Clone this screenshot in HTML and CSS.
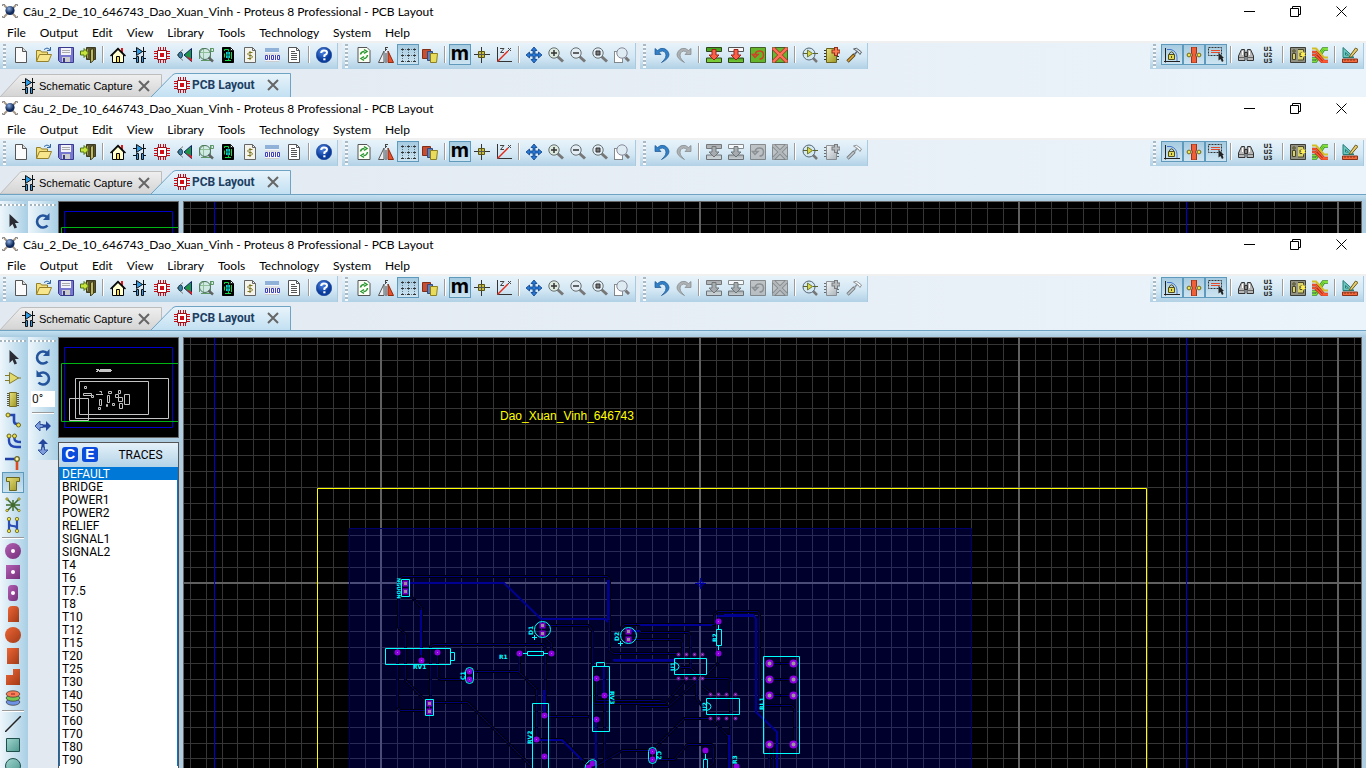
FILE: index.html
```html
<!DOCTYPE html>
<html lang="en">
<head>
<meta charset="utf-8">
<title>Proteus 8 Professional - PCB Layout</title>
<link rel="stylesheet" href="styles.css">
</head>
<body>
<svg class="sprite" width="0" height="0" aria-hidden="true">
  <defs>
    <linearGradient id="gGreen" x2="0" y2="1"><stop offset="0" stop-color="#3fa01c"/><stop offset="1" stop-color="#7fd03a"/></linearGradient>
    <linearGradient id="gGold" x2="1" y2="1"><stop offset="0" stop-color="#e8e27c"/><stop offset="1" stop-color="#9c9423"/></linearGradient>
    <linearGradient id="gPurple" x2="1" y2="1"><stop offset="0" stop-color="#b45fb4"/><stop offset="1" stop-color="#74307a"/></linearGradient>
    <linearGradient id="gOrange" x2="1" y2="1"><stop offset="0" stop-color="#ee6636"/><stop offset="1" stop-color="#a13a17"/></linearGradient>
    <linearGradient id="gTeal" x2="1" y2="1"><stop offset="0" stop-color="#9fd6cf"/><stop offset="1" stop-color="#4f9890"/></linearGradient>
    <linearGradient id="gTab" x2="0" y2="1"><stop offset="0" stop-color="#e9f4fb"/><stop offset="1" stop-color="#c2e0f2"/></linearGradient>
    <linearGradient id="gTabOff" x2="0" y2="1"><stop offset="0" stop-color="#efefef"/><stop offset="1" stop-color="#d4d4d4"/></linearGradient>
    <radialGradient id="gBall" cx=".4" cy=".3"><stop offset="0" stop-color="#8fb0de"/><stop offset="1" stop-color="#102a5c"/></radialGradient>
    <radialGradient id="gHelp" cx=".4" cy=".3"><stop offset="0" stop-color="#4f86e6"/><stop offset="1" stop-color="#0c3d9c"/></radialGradient>
  </defs>

  <symbol id="logo" viewBox="0 0 16 16"><path d="M2 2l4 4M14 2l-4 4M2 14l4-4M14 14l-4-4" stroke="#a89a88" stroke-width="2"/><path d="M.5 3V1.500H3M15.500 3V1.500H13M.5 13v1.500H3M15.500 13v1.500H13" fill="none" stroke="#888"/><circle cx="8" cy="7.500" r="4.600" fill="url(#gBall)"/></symbol>
  <symbol id="new" viewBox="0 0 16 16"><path d="M1.500.5h7l4 4v11h-11z" fill="#fbfbfb" stroke="#555"/><path d="M8.500.5v4h4" fill="#ddd" stroke="#555"/></symbol>
  <symbol id="open" viewBox="0 0 16 16"><path d="M.5 14V3.500h4l1 1.500h6v2" fill="#f3df7c" stroke="#94802a"/><path d="M.5 14.500l3-7h12l-3 7z" fill="#f7e68b" stroke="#94802a"/><path d="M8 2.500q3-3 6 0M14.500 0v3.500h-3.500" fill="none" stroke="#2f66a6"/></symbol>
  <symbol id="save" viewBox="0 0 16 16"><path d="M.5.5h15v15h-13l-2-2z" fill="#7878cf" stroke="#38388c"/><path d="M3 1h10v7H3z" fill="#f3f3fb"/><path d="M4 3.500h8M4 5.500h8" stroke="#aaa"/><path d="M4 10h8v5H4z" fill="#ccc"/><path d="M5 11h2v4H5z" fill="#38388c"/></symbol>
  <symbol id="exit" viewBox="0 0 16 16"><path d="M6.500.5h9v12h-9z" fill="#5a5630" stroke="#3c3c22"/><path d="M10.500 2.500l3-1v12l-3 2.500z" fill="#c2ba58" stroke="#3c3c22"/><path d="M7.500 2v9" stroke="#a39b4c"/><path d="M.5 4H4V1.500L8.500 6 4 10.500V8H.5z" fill="#c7e43c" stroke="#4e7516"/></symbol>
  <symbol id="home" viewBox="0 0 16 16"><path d="M11 1h2v5h-2z" fill="#e21818"/><path d="M2.500 8v7.500h11V8L8 2.500z" fill="#ffffd0" stroke="#000"/><path d="M.5 9L8 1.500 15.500 9" fill="none" stroke="#000" stroke-width="1.500"/><path d="M6.500 9.500h3v6h-3z" fill="#ffdf2a" stroke="#000"/></symbol>
  <symbol id="schem" viewBox="0 0 16 16"><path d="M1 4.500h13M9 11.500h5M1 11.500h3" stroke="#111"/><path d="M4.500.5v8l6-4z" fill="#2c9be8" stroke="#111"/><path d="M11.500 0v9" stroke="#111"/><path d="M4.500 9.500h2v6h-2zM9.500 9.500h2v6h-2z" fill="#2c9be8" stroke="#111"/></symbol>
  <symbol id="pcb" viewBox="0 0 16 16"><path d="M4.500 0v16M6.500 0v16M9.500 0v16M11.500 0v16M0 4.500h16M0 6.500h16M0 9.500h16M0 11.500h16" stroke="#c40f18"/><path d="M3.500 3.500h9v9h-9z" fill="#fff" stroke="#a30b14"/><path d="M6 6h4v4H6z" fill="#d40e18"/></symbol>
  <symbol id="view3d" viewBox="0 0 16 16"><path d="M7 2.500L1 8l6 5.500" fill="none" stroke="#777"/><ellipse cx="4.500" cy="8" rx="2" ry="3" fill="#3d83a8" stroke="#245"/><path d="M15.500 1.500v13L8 8z" fill="#1d9446" stroke="#126"/><path d="M10 9l6 3v3z" fill="#d91f1f"/></symbol>
  <symbol id="gerber" viewBox="0 0 16 16"><path d="M1.500 12V3.500L4 1.500h4M12.500 1v13M3 13.500h9M2 5.500h10M5.500 1v12M13 1.500h2.500v3H13z" fill="none" stroke="#5c9662"/><circle cx="7" cy="7" r="5.500" fill="#c7ead2" fill-opacity=".5" stroke="#4f7560"/><path d="M10.500 10.500l4.500 4" stroke="#5f6262" stroke-width="2.500"/></symbol>
  <symbol id="design" viewBox="0 0 16 16"><path d="M2.500.5h8l3 3v12h-11z" fill="#000" stroke="#000"/><path d="M4.500 4v-1.500h4v2M4.500 6.500v4M5 13.500h6M8.500 11v2M11.500 5v7" fill="none" stroke="#15d845"/><path d="M6 5h4v6H6z" fill="#00d9dd"/><path d="M8 4v8M5 8h6" stroke="#08483f"/><path d="M10.500.5v3h3z" fill="#fff" stroke="#222"/></symbol>
  <symbol id="bom" viewBox="0 0 16 16"><path d="M2.500.5h8l3 3v12h-11z" fill="#f4f4ec" stroke="#666"/><path d="M10.500.5v3h3" fill="none" stroke="#666"/><path d="M10.500 5.500H7L5.500 7 7 8.500h2.500L10.500 10 9 11.500H5.500M8 4v9" fill="none" stroke="#7d741f"/></symbol>
  <symbol id="source" viewBox="0 0 16 16"><path d="M1 1h14v4H1z" fill="#90b1d8"/><path d="M1 5h14v10H1z" fill="#f3f5f8"/><path d="M1 7h14M1 14.500h14" stroke="#ccc"/><path d="M1.500 8.500h2v4h-2zM5.500 8v5M7.500 8.500h2v4h-2zM11.500 8v5M13.500 8.500h2v4h-2z" fill="none" stroke="#3e3ebc"/></symbol>
  <symbol id="notes" viewBox="0 0 16 16"><path d="M2.500.5h8l3 3v12h-11z" fill="#fff" stroke="#555"/><path d="M10.500.5v3h3M5 4.500h4M5 6.500h6M5 8.500h6M5 10.500h6M5 12.500h6" fill="none" stroke="#555"/></symbol>
  <symbol id="help" viewBox="0 0 16 16"><circle cx="8" cy="8" r="7.700" fill="url(#gHelp)" stroke="#123c8e" stroke-width=".6"/><path d="M5.200 6Q5.200 3.500 8 3.500q3 0 3 2.200Q11 7.200 8.400 8.300V10" fill="none" stroke="#fff" stroke-width="2"/><path d="M7.300 11.300h2.200v2H7.300z" fill="#fff"/></symbol>
  <symbol id="refresh" viewBox="0 0 16 16"><path d="M2 .5h9l3 3v12H2z" fill="#fcfff4" stroke="#555"/><path d="M4.500 7.500q.5-3 4-3M8 2.500l3 2-3 2M11.500 8q-.5 3.500-4 3.500M8 9.500l-3 2 3 2" fill="none" stroke="#2b9733" stroke-width="1.500"/></symbol>
  <symbol id="mirror" viewBox="0 0 16 16"><path d="M.5 15.500H6V4z" fill="#eceff2" stroke="#555"/><path d="M10 4v11.500h5.500z" fill="#e84f2d" stroke="#8c2c12"/><path d="M8 6v10M7 .5h3M7.500 0v4M7 2.500h2" stroke="#444" fill="none"/></symbol>
  <symbol id="grid" viewBox="0 0 16 16"><path d="M2.500 1v14M8.500 1v14M14.500 1v14M1 2.500h15M1 8.500h15M1 14.500h15" stroke="#5c7382" stroke-dasharray="1 1"/><path d="M1 2.500h3M7 2.500h3M13 2.500h3M1 8.500h3M7 8.500h3M13 8.500h3M1 14.500h3M7 14.500h3M13 14.500h3" stroke="#333"/></symbol>
  <symbol id="layers" viewBox="0 0 16 16"><path d="M.5 2.500h8v9h-8z" fill="#c84e32" stroke="#803018"/><path d="M5.500 4.500h5v9h-5z" fill="#6080bc" stroke="#34497c"/><path d="M8.500 6.500h7l-1 9h-6z" fill="#e9dc5c" stroke="#8b7f22"/></symbol>
  <symbol id="origin" viewBox="0 0 16 16"><path d="M7.500 0v16M0 7.500h16" stroke="#333"/><path d="M4.500 4.500h6v6h-6z" fill="#c9bd3c" stroke="#5a5516"/><path d="M7.500 5v5M5 7.500h5" stroke="#555"/></symbol>
  <symbol id="polar" viewBox="0 0 16 16"><path d="M1.500 0v14.500H16" fill="none" stroke="#333"/><path d="M1.500 14.500L12 4" stroke="#e12b1a" stroke-width="1.400"/><path d="M4 1.500h4L4.500 5.500H8M12 1l3 3M15 1l-3 3" fill="none" stroke="#444"/></symbol>
  <symbol id="pan" viewBox="0 0 16 16"><path d="M8 0l3 3.500H9V7h3.500V5L16 8l-3.500 3V9H9v3.500h2L8 16l-3-3.500h2V9H3.500v2L0 8l3.500-3v2H7V3.500H5z" fill="#2679d6" stroke="#0e3f87" stroke-width=".8"/></symbol>
  <symbol id="zin" viewBox="0 0 16 16"><path d="M9.500 9.500l5.500 5" stroke="#777" stroke-width="3"/><circle cx="6" cy="6" r="5.200" fill="#ddeadf" stroke="#667070"/><path d="M3 6h6M6 3v6" stroke="#333" stroke-width="1.500"/></symbol>
  <symbol id="zout" viewBox="0 0 16 16"><path d="M9.500 9.500l5.500 5" stroke="#777" stroke-width="3"/><circle cx="6" cy="6" r="5.200" fill="#e3edf6" stroke="#667070"/><path d="M3 6h6" stroke="#333" stroke-width="1.500"/></symbol>
  <symbol id="zall" viewBox="0 0 16 16"><path d="M9.500 9.500l5.500 5" stroke="#777" stroke-width="3"/><circle cx="6" cy="6" r="5.200" fill="#e3edf6" stroke="#667070"/><path d="M4 4h4v4H4z" fill="#777" stroke="#333"/></symbol>
  <symbol id="zarea" viewBox="0 0 16 16"><path d="M.5 4.500h8v11h-8z" fill="#fff" stroke="#222" stroke-dasharray="1 1"/><path d="M11.500 10.500l3.500 3.500" stroke="#777" stroke-width="3"/><circle cx="8" cy="6" r="5.200" fill="#dfebf3" stroke="#889"/></symbol>
  <symbol id="undo" viewBox="0 0 16 16"><path d="M1 1.500v6h6L5 5.500q4-3 6.500.5 2 4.500-4 9.500 8-4 7.500-8.500Q13 .5 6.500 1.500L3.500 3.500z" fill="#3280c8" stroke="#1a5591" stroke-width=".7"/></symbol>
  <symbol id="redo" viewBox="0 0 16 16"><path d="M15 1.500v6H9l2-2q-4-3-6.500.5-2 4.500 4 9.500-8-4-7.500-8.500Q3 .5 9.500 1.500l3 2z" fill="#aeb2b5" stroke="#808588" stroke-width=".7"/></symbol>
  <symbol id="push" viewBox="0 0 16 16"><path d="M.5.5h15v4H.5zM.5 11h15v4.500H.5z" fill="url(#gGreen)" stroke="#31451c"/><path d="M6 2.500h4V8h3l-5 5-5-5h3z" fill="#fa6049" stroke="#9b2418"/></symbol>
  <symbol id="pull" viewBox="0 0 16 16"><path d="M.5.5h15v4H.5z" fill="#f6f6f6" stroke="#555"/><path d="M.5 11h15v4.500H.5z" fill="url(#gGreen)" stroke="#31451c"/><path d="M6 2.500h4V8h3l-5 5-5-5h3z" fill="#fa6049" stroke="#9b2418"/></symbol>
  <symbol id="reload" viewBox="0 0 16 16"><path d="M.5.5h15v15H.5z" fill="#65b52b" stroke="#436028"/><path d="M5 8q.5-4 4.500-4t4 4q0 4-4 4M2.500 7.500L5 10.500l3-3z" fill="none" stroke="#ce4226" stroke-width="1.500"/></symbol>
  <symbol id="clear" viewBox="0 0 16 16"><path d="M.5.500h15v15H.5z" fill="#68b52e" stroke="#436028"/><path d="M1 1l14 14M15 1L1 15" stroke="#9c3020" stroke-width="4"/><path d="M1 1l14 14M15 1L1 15" stroke="#fa7058" stroke-width="2.500"/></symbol>
  <symbol id="pick" viewBox="0 0 16 16"><path d="M10 10l5 5" stroke="#777" stroke-width="2.500"/><circle cx="7" cy="7" r="6" fill="#d4e8f2" stroke="#567"/><path d="M1 6.500h4M11 6.500h5" stroke="#596332"/><path d="M5.500 3v7l5-3.500z" fill="#d6d84c" stroke="#767926"/></symbol>
  <symbol id="addpart" viewBox="0 0 16 16"><path d="M2.500 1.500h10v14h-10z" fill="url(#gGold)" stroke="#69621d"/><path d="M0 3.500h2M0 6.500h2M0 9.500h2M0 12.500h2M13 9.500h2M13 12.500h2" stroke="#333"/><path d="M12 0v9M7.500 4.500h8.500" stroke="#91301c" stroke-width="4"/><path d="M12 1v7M8.500 4.500h7" stroke="#fa7a51" stroke-width="2"/></symbol>
  <symbol id="hammer" viewBox="0 0 16 16"><path d="M1.500 14.500l7-7" stroke="#5b4215" stroke-width="3.200"/><path d="M1.800 14.200l6-6" stroke="#dda236" stroke-width="1.600"/><path d="M8.500 7.500L11 4.500" stroke="#59616a" stroke-width="1.600"/><path d="M7.500 2q3-2 5.500 1l2.500 2-1.500 2.500-2-2.500-2-1.500z" fill="#dce0e4" stroke="#59616a"/></symbol>
  <symbol id="trim" viewBox="0 0 16 16"><path d="M1.500 1v14.500M0 14.500h16" stroke="#222"/><path d="M3 2.500h4q6 2 6 8V14" fill="none" stroke="#4675c8"/><path d="M4.500 7.500h6v5h-6z" fill="#e2da52" stroke="#504c1c"/><path d="M5.500 7.500V6q2-2.500 4 0v1.500M7.500 9v2" fill="none" stroke="#504c1c"/></symbol>
  <symbol id="via" viewBox="0 0 16 16"><path d="M5.500 0h5v6l-1 2 1 2v6h-5v-6l1-2-1-2z" fill="#ef6039" stroke="#9c3117"/><circle cx="3" cy="8" r="1.900" fill="#f0e44f" stroke="#6e681e"/><circle cx="13" cy="8" r="1.900" fill="#f0e44f" stroke="#6e681e"/></symbol>
  <symbol id="select" viewBox="0 0 16 16"><path d="M.5.5h13v8H.5z" fill="none" stroke="#333" stroke-dasharray="2 1"/><path d="M3 3.500h9M3 5.500h9" stroke="#e34a2b"/><path d="M10.500 5.500v8l2-1.500 1.500 3 1.500-1-1-3h1.500z" fill="#222"/></symbol>
  <symbol id="find" viewBox="0 0 16 16"><path d="M.5 13.500V9l3-6.500h3l.5 3v8zM15.500 13.500V9l-3-6.500h-3l-.5 3v8z" fill="#b9b9b9" stroke="#333"/><path d="M6.500 5.500h3v4h-3z" fill="#888" stroke="#333"/><path d="M1 10.500h5.500M9.500 10.500H15" stroke="#666"/><path d="M4.500 4v4M11.500 4v4" stroke="#fff"/></symbol>
  <symbol id="place" viewBox="0 0 16 16"><path d="M.5.5h15v15H.5z" fill="#929282" stroke="#3d3d37"/><path d="M3 3h2v2H3zM2.500 6.500h3v6h-3zM8 2.500h5.500v3.500H10v3.500h3.500v3.500H8" fill="#d9d26a" stroke="#48462a"/><path d="M13 4l1 2 2-.5-1.500 2L16 9h-2l-1 2-1-2h-2l1.500-1.500L10 5.500l2 .5z" fill="#ffef4f"/></symbol>
  <symbol id="route" viewBox="0 0 16 16"><path d="M0 14.500h4l8-12h4M0 11.500h4l7-10h5" fill="none" stroke="#3c8a1f" stroke-width="2.600"/><path d="M0 14.500h4l8-12h4M0 11.500h4l7-10h5" fill="none" stroke="#7fe03c" stroke-width="1.200"/><path d="M0 1.500h4l8 9h4" fill="none" stroke="#d2bd25" stroke-width="2"/><path d="M0 5h4l8 9h4M0 8h3l7 7h6" fill="none" stroke="#a32c14" stroke-width="2.600"/><path d="M0 5h4l8 9h4M0 8h3l7 7h6" fill="none" stroke="#ff5a36" stroke-width="1.400"/></symbol>
  <symbol id="measure" viewBox="0 0 16 16"><path d="M1 .5v10h11z" fill="#6bc7c0" stroke="#247d77"/><path d="M3.500 5.500V8h3z" fill="#dceff4" stroke="#247d77"/><path d="M7 10l6.500-9 2.500 1.500L9.500 10z" fill="#e9cd6c" stroke="#6c5b22"/><path d="M.5 12h15v3.500H.5z" fill="#f36a3d" stroke="#8a3219"/><path d="M3 12v2M6 12v2M9 12v2M12 12v2" stroke="#8a3219"/></symbol>

  <symbol id="arrow" viewBox="0 0 16 16"><path d="M4.500 1v13l3-3 2 4.500 2.500-1-2-4.500H14z" fill="#2b2b33"/></symbol>
  <symbol id="comp" viewBox="0 0 16 16"><path d="M0 5.500h4M0 10.500h4M13 8h3" stroke="#857b2c"/><path d="M4.500 2.500v11l9-5.500z" fill="#e2da6a" stroke="#857b2c"/></symbol>
  <symbol id="pack" viewBox="0 0 16 16"><path d="M2 2.500h12M2 4.500h12M2 6.500h12M2 8.500h12M2 10.500h12M2 12.500h12M2 14.500h12" stroke="#555"/><path d="M4.500 1.500h7v14h-7z" fill="url(#gGold)" stroke="#746d22"/></symbol>
  <symbol id="track" viewBox="0 0 16 16"><path d="M3 3h6v6q0 3 3 3h2" fill="none" stroke="#2547b3" stroke-width="2.600"/><circle cx="3" cy="3" r="2" fill="#e9df47" stroke="#6c6520"/><circle cx="13.500" cy="13" r="2" fill="#e9df47" stroke="#6c6520"/></symbol>
  <symbol id="match" viewBox="0 0 16 16"><path d="M4 3v5q0 6 8 6h4M9.500 3v3q0 3 6.500 3" fill="none" stroke="#2547b3" stroke-width="2.400"/><circle cx="4" cy="3" r="2" fill="#e9df47" stroke="#6c6520"/><circle cx="9.500" cy="3" r="2" fill="#e9df47" stroke="#6c6520"/></symbol>
  <symbol id="viat" viewBox="0 0 16 16"><path d="M0 5h12" stroke="#1f3fa6" stroke-width="2.500"/><path d="M12 6v10" stroke="#dd4a20" stroke-width="2.600"/><circle cx="12" cy="5" r="2.300" fill="#f8f3ac" stroke="#6c6520" stroke-width="1.300"/></symbol>
  <symbol id="zone" viewBox="0 0 16 16"><path d="M1.500 2.500h13v4h-3v9h-7v-9h-3z" fill="url(#gGold)" stroke="#6c6520"/></symbol>
  <symbol id="rats" viewBox="0 0 16 16"><path d="M2 3l12 12M14 3L2 15M8 4v11M1 9h14" stroke="#3f6b2c" stroke-width="1.500"/><g fill="#e9df47" stroke="#6c6520" stroke-width=".7"><circle cx="2" cy="3" r="1.200"/><circle cx="14" cy="3" r="1.200"/><circle cx="2" cy="14.500" r="1.200"/><circle cx="14" cy="14.500" r="1.200"/></g></symbol>
  <symbol id="conn" viewBox="0 0 16 16"><path d="M4 3v11M12 3v11M4 6q0 3 4 3t4 3" fill="none" stroke="#2b4db3" stroke-width="2.200"/><g fill="#e9df47" stroke="#6c6520" stroke-width=".8"><circle cx="4" cy="2" r="1.700"/><circle cx="12" cy="2" r="1.700"/><circle cx="4" cy="14" r="1.700"/><circle cx="12" cy="14" r="1.700"/></g></symbol>
  <symbol id="padround" viewBox="0 0 16 16"><circle cx="8" cy="8" r="8" fill="url(#gPurple)"/><circle cx="8" cy="8" r="2" fill="#fff"/></symbol>
  <symbol id="padsq" viewBox="0 0 16 16"><path d="M1 1h14v14H1z" fill="url(#gPurple)"/><circle cx="8" cy="8" r="2" fill="#fff"/></symbol>
  <symbol id="paddil" viewBox="0 0 16 16"><rect x="3" width="10" height="16" rx="3.500" fill="url(#gPurple)"/><circle cx="8" cy="8" r="2" fill="#fff"/></symbol>
  <symbol id="edge" viewBox="0 0 16 16"><path d="M3 16V4q0-4 4-4h3q4 0 4 4v12z" fill="url(#gOrange)"/></symbol>
  <symbol id="smtc" viewBox="0 0 16 16"><circle cx="8" cy="8" r="8" fill="url(#gOrange)"/></symbol>
  <symbol id="smtr" viewBox="0 0 16 16"><path d="M2 0h12v16H2z" fill="url(#gOrange)"/></symbol>
  <symbol id="smtp" viewBox="0 0 16 16"><path d="M1 16V6h7V0h7v16z" fill="url(#gOrange)"/></symbol>
  <symbol id="stack" viewBox="0 0 16 16"><g stroke="#333" stroke-width=".7"><ellipse cx="8" cy="12" rx="6.800" ry="3.300" fill="#6d92e6"/><ellipse cx="8" cy="8" rx="6.800" ry="3.200" fill="#78c652"/><ellipse cx="8" cy="4" rx="6.800" ry="3.200" fill="#fa7d55"/></g><path d="M6 4h4" stroke="#822"/></symbol>
  <symbol id="line" viewBox="0 0 16 16"><path d="M0 16L16 0" stroke="#222" stroke-width="1.500"/></symbol>
  <symbol id="box" viewBox="0 0 16 16"><path d="M1.500 1.500h13v13h-13z" fill="url(#gTeal)" stroke="#1f4f4a"/></symbol>
  <symbol id="circ" viewBox="0 0 16 16"><circle cx="8" cy="8" r="7.500" fill="url(#gTeal)" stroke="#1f4f4a"/></symbol>
  <symbol id="cw" viewBox="0 0 16 16"><path d="M12.500 12.500A6 6 0 1 1 12 4" fill="none" stroke="#24549c" stroke-width="2.600"/><path d="M14.500 0v7H8z" fill="#24549c"/></symbol>
  <symbol id="ccw" viewBox="0 0 16 16"><path d="M3.500 12.500A6 6 0 1 0 4 4" fill="none" stroke="#24549c" stroke-width="2.600"/><path d="M1.500 0v7H8z" fill="#24549c"/></symbol>
  <symbol id="fliph" viewBox="0 0 16 16"><path d="M0 8l5-5v3.500h3v3H5V13z" fill="#7d9ddd" stroke="#34529b"/><path d="M16 8l-5-5v3.500H8v3h3V13z" fill="#24469c"/></symbol>
  <symbol id="flipv" viewBox="0 0 16 16"><path d="M8 16l-5-5h3.500V8h3v3H13z" fill="#7d9ddd" stroke="#34529b"/><path d="M8 0L3 5h3.500v3h3V5H13z" fill="#24469c"/></symbol>
  <symbol id="close" viewBox="0 0 12 12"><path d="M1 1l10 10M11 1L1 11" stroke="#666" stroke-width="2"/></symbol>

  <symbol id="surface" overflow="visible">
    <path id="gridMinor" class="grid-minor"/>
    <path class="grid-major" d="M381 337v900M700 337v900M1019 337v900M1338 337v900M183 583h1178"/>
    <path class="limit" d="M214.500 337v900M1186.500 337v900"/>
  </symbol>
  <symbol id="overview" overflow="visible">
    <path d="M64.500 347.500h108v80h-108z" stroke="#0000c8" fill="none"/>
    <path d="M180 363.500H61.500v58H180" stroke="#00b414" fill="none"/>
  </symbol>
  <symbol id="copper" overflow="visible">
    <path d="M398 600V580L402 576H607L609 579V650L613 653H678M405 590L421 607V658M398 597V627L405 634V680L429 704M397 652V707L400 710H429M430 703V646L433 644H543L545 648V715M437 652V677L440 679H469M469 671H518L536 689V739M519 653V671M429 702H467L531 766M542 634L551 643V653M543 625H588L592 630V702L595 703H665L687 678M545 716H588L592 719H596M536 739H562L590 767M604 662V768M596 680V700H660M596 719V768M621 640V627L624 624H714V614L717 611H757L759 614V698M640 632H688L690 635V668M628 639H680L682 642V654M613 661H675M640 706H668L697 680M718 621V613M718 653V662L703 677M703 678H728L730 681V768M696 678V698L711 718M702 686L712 694M680 667h10l9 9M652 750L684 718H711M711 718L728 736V768M652 759H674L687 744H711L713 747V762L708 766M595 766L622 750H652M770 663H793M770 679H793M770 695H793M765 705H791L794 708V744M769 744V768M773 748V768"/>
  </symbol>
</svg>

<template id="chrome">
  <header class="titlebar">
    <svg class="logo"><use href="#logo"/></svg>
    <h1>Câu_2_De_10_646743_Dao_Xuan_Vinh - Proteus 8 Professional - PCB Layout</h1>
    <div class="winbtns">
      <button aria-label="Minimize"><svg viewBox="0 0 11 11"><path d="M0 5.500h11"/></svg></button>
      <button aria-label="Restore"><svg viewBox="0 0 11 11"><path d="M.5 2.500h8v8h-8zM2.500 2.500v-2h8v8h-2"/></svg></button>
      <button aria-label="Close"><svg viewBox="0 0 11 11"><path d="M.5.5l10 10M10.500.5l-10 10"/></svg></button>
    </div>
  </header>
  <nav class="menubar"><button>File</button><button>Output</button><button>Edit</button><button>View</button><button>Library</button><button>Tools</button><button>Technology</button><button>System</button><button>Help</button></nav>
  <div class="toolbars">
    <div class="bar" data-icons="new open save exit | home schem pcb view3d gerber design bom source notes | help"></div>
    <div class="bar" data-icons="refresh mirror grid* layers | m* origin polar | pan zin zout zall zarea"></div>
    <div class="bar" data-icons="undo redo | push? pull? reload? clear? | pick addpart? hammer?"></div>
    <div class="bar bar-end" data-icons="trim* via* select* | find annot | place route | measure"></div>
  </div>
  <div class="tabs">
    <div class="tab">
      <svg class="tab-shape" viewBox="0 0 162 24"><path d="M0 24L19 3.500q1-2 4-2h138.500V24z" fill="url(#gTabOff)" stroke="#bdbdbd"/></svg>
      <button class="tab-label"><svg><use href="#schem"/></svg>Schematic Capture</button>
      <button class="tab-close" aria-label="Close Schematic Capture"><svg><use href="#close"/></svg></button>
    </div>
    <div class="tab tab-on">
      <svg class="tab-shape" viewBox="0 0 140 24"><path d="M0 24L21 2.500q2-2 4-2h114.500V24" fill="url(#gTab)" stroke="#6ea3c3"/></svg>
      <button class="tab-label"><svg><use href="#pcb"/></svg>PCB Layout</button>
      <button class="tab-close" aria-label="Close PCB Layout"><svg><use href="#close"/></svg></button>
    </div>
  </div>
</template>

<section class="window"></section>

<section class="window idle">
  <main class="work">
    <div class="palette" data-icons="arrow"></div>
    <div class="palette rotate" data-icons="cw"></div>
    <div class="side"><div class="mini"><svg><g transform="translate(-59 -338)"><use href="#overview"/></g></svg></div></div>
    <div class="canvas"><svg><g transform="translate(-184 -338)"><use href="#surface"/></g></svg></div>
  </main>
</section>

<section class="window idle fill">
  <main class="work">
    <div class="palette" data-icons="arrow comp pack track match viat zone* rats conn | padround padsq paddil edge smtc smtr smtp stack | line box circ"></div>
    <div class="palette rotate" data-icons="cw ccw # | fliph flipv"></div>
    <div class="side">
      <div class="mini"><svg><g transform="translate(-59 -338)" fill="none" stroke="#c4c4c4">
        <path d="M96 369.500h3M100 369.500h11M97 370.500h15M96 371.500h2M99 371.500h12"/>
        <path d="M75.500 378.500h93v40h-93zM79.500 381.500h69v33h-69zM69.500 398.500h19v22h-19zM84.500 386.500h2v2h-2zM83.500 393.500h8v2h-8zM91.500 395.500h2v2h-2zM96 394.500h7M99.500 391.500h2v2M99.500 399.500h2v6h-2zM98.500 407.500h2v2h-2zM107.500 395.500h2v7h-2zM108.500 391.500h3v2h-3zM106.500 404.500h1v2h-1zM112.500 403.500h2v2h-2zM118.500 390.500h2v3h-2zM115.500 394.500h3v3h-3zM118.500 397.500h4v4h-4zM119.500 403.500h3v5h-3zM124.500 394.500h5v10h-5z"/>
        <use href="#overview"/></g></svg></div>
      <div class="traces">
        <div class="traces-head"><button>C</button><button>E</button><h2>TRACES</h2></div>
        <ul role="listbox" aria-label="Traces"><li role="option" aria-selected="true">DEFAULT</li><li role="option">BRIDGE</li><li role="option">POWER1</li><li role="option">POWER2</li><li role="option">RELIEF</li><li role="option">SIGNAL1</li><li role="option">SIGNAL2</li><li role="option">T4</li><li role="option">T6</li><li role="option">T7.5</li><li role="option">T8</li><li role="option">T10</li><li role="option">T12</li><li role="option">T15</li><li role="option">T20</li><li role="option">T25</li><li role="option">T30</li><li role="option">T40</li><li role="option">T50</li><li role="option">T60</li><li role="option">T70</li><li role="option">T80</li><li role="option">T90</li></ul>
      </div>
    </div>
    <div class="canvas"><svg><g transform="translate(-184 -338)">
      <use href="#surface"/>
      <path class="zone" d="M349.500 900V528.500h622V900"/>
      <path class="edge" d="M317.500 900V488.500h829V900"/>
      <use href="#copper" class="copper-gap" x=".5" y=".5"/>
      <use href="#copper" class="copper" x=".5" y=".5"/>
      <path class="copper-wide" d="M405 583H504L541 619H605L608 622M608 580V620M421 610V655M536 740H562L582 760M717 616H754L756 619V712L777 732V768M724 615H754M596 722V768M604 665V695M544 690V712M729 735V768M640 625H712M626 631H640M613 660H676"/>
      <path class="originmark" d="M700.500 578v11M695 583.500h11M697 583.500l3.500-3.500 3.500 3.500-3.500 3.500z"/>
      <g class="pads">
        <path class="sq" d="M405.500 583.500h0M405.500 591.500h0M542.500 625.500h0M542.500 633.500h0M628.500 631.500h0M628.500 639.500h0M429.500 703.500h0M429.500 711.500h0"/>
        <path class="rd" d="M397.500 652.500h0M421.500 660.500h0M437.500 652.500h0M469.500 671.500h0M469.500 679.500h0M519.500 653.500h0M551.500 653.500h0M596.500 678.500h0M604.500 695.500h0M596.500 719.500h0M544.500 715.500h0M536.500 739.500h0M544.500 756.500h0M592.500 763.500h0M588.500 767.500h0M652.500 751.500h0M652.500 759.500h0M718.500 621.500h0M718.500 653.500h0M705.500 750.500h0M736.500 766.500h0"/>
        <path class="sm" d="M678.500 654.500h0M686.500 654.500h0M694.500 654.500h0M702.500 654.500h0M678.500 678.500h0M686.500 678.500h0M694.500 678.500h0M702.500 678.500h0M710.500 694.500h0M718.500 694.500h0M726.500 694.500h0M735.500 694.500h0M710.500 718.500h0M718.500 718.500h0M726.500 718.500h0M735.500 718.500h0"/>
        <path class="lg" d="M769.500 663.500h0M769.500 679.500h0M769.500 695.500h0M769.500 744.500h0M793.500 663.500h0M793.500 679.500h0M793.500 695.500h0M793.500 744.500h0"/>
        <path class="hole" d="M405.500 583.500h0M405.500 591.500h0M542.500 625.500h0M542.500 633.500h0M628.500 631.500h0M628.500 639.500h0M429.500 703.500h0M429.500 711.500h0"/>
        <path class="holelg" d="M769.500 663.500h0M769.500 679.500h0M769.500 695.500h0M769.500 744.500h0M793.500 663.500h0M793.500 679.500h0M793.500 695.500h0M793.500 744.500h0"/>
        <path class="holesm" d="M397.500 652.500h0M421.500 660.500h0M437.500 652.500h0M469.500 671.500h0M469.500 679.500h0M519.500 653.500h0M551.500 653.500h0M596.500 678.500h0M604.500 695.500h0M596.500 719.500h0M544.500 715.500h0M536.500 739.500h0M544.500 756.500h0M652.500 751.500h0M652.500 759.500h0M718.500 621.500h0M718.500 653.500h0M678.500 654.500h0M686.500 654.500h0M694.500 654.500h0M702.500 654.500h0M678.500 678.500h0M686.500 678.500h0M694.500 678.500h0M702.500 678.500h0M710.500 694.500h0M718.500 694.500h0M726.500 694.500h0M735.500 694.500h0M710.500 718.500h0M718.500 718.500h0M726.500 718.500h0M735.500 718.500h0"/>
      </g>
      <g class="silk">
        <path d="M401.500 579.500h8v17h-8zM385.500 648.500h65v16h-65zM450.500 652.500h4v8h-4M527.500 651.500h16v4h-16zM523 653.500h4M544 653.500h4M425.500 699.500h8v16h-8zM592.500 666.500h17v65h-17zM596.500 666v-3.500h8v4M532.500 900V703.500h16V900M674.500 658.500h32v16h-32zM675 662.500q4 1 4 4t-4 4M706.500 698.500h33v16h-33zM707 702.500q4 1 4 4t-4 4M716.500 629.500h5v16h-5zM718.500 625v4M718.500 646v4M763.500 656.500h36v97h-36zM703.500 900V759.500h4V900M705.500 754v5M532 637.500h5M534.500 635v5M618 643.500h5M620.500 641v5M585 768q0-4 3-6 4-4 8-1v7"/>
        <circle cx="542.500" cy="629.500" r="8"/><circle cx="628.500" cy="635.500" r="8"/>
        <rect x="465.500" y="667.500" width="8" height="16" rx="4"/><rect x="648.500" y="747.500" width="8" height="16" rx="4"/>
      </g>
      <g class="refs">
        <text class="long" transform="translate(397 578) rotate(90)">NGUON</text>
        <text x="413" y="669">RV1</text><text x="499" y="659">R1</text>
        <text transform="translate(533 635) rotate(-90)">D1</text>
        <text transform="translate(619 641) rotate(-90)">D2</text>
        <text transform="translate(465 680) rotate(-90)">C1</text>
        <text transform="translate(532 744) rotate(-90)">RV2</text>
        <text transform="translate(610 691) rotate(90)">RV3</text>
        <text transform="translate(675 671) rotate(-90)">U1</text>
        <text transform="translate(707 711) rotate(-90)">U2</text>
        <text transform="translate(717 642) rotate(-90)">R2</text>
        <text transform="translate(764 710) rotate(-90)">RL1</text>
        <text transform="translate(657 751) rotate(90)">C2</text>
        <text transform="translate(737 764) rotate(-90)">R3</text>
      </g>
      <text class="caption" x="500" y="420">Dao_Xuan_Vinh_646743</text>
    </g></svg></div>
  </main>
</section>
<script src="app.js"></script>
</body>
</html>
```
FILE: styles.css
```css
* { box-sizing: border-box; }
body {
  margin: 0;
  height: 100vh;
  display: flex;
  flex-direction: column;
  overflow: hidden;
  background: #fff;
  color: #000;
  font: 12px/16px Roboto, "Noto Sans", sans-serif;
}
button { margin: 0; padding: 0; border: 0; background: none; color: inherit; font: inherit; display: flex; align-items: center; justify-content: center; }
h1, h2, ul { margin: 0; padding: 0; font: inherit; list-style: none; }
svg { display: block; flex: none; }
.sprite { position: absolute; }

.window { flex: none; display: flex; flex-direction: column; overflow: hidden; background: linear-gradient(90deg, #e2e9f0, #ebf3fb); }
.fill { flex: 1; min-height: 0; }

.titlebar { display: flex; align-items: center; height: 22px; padding: 0 2px; background: #fff; font-family: Lato, sans-serif; }
.logo { width: 16px; height: 16px; }
.titlebar h1 { margin-left: 5px; padding-top: 2px; white-space: nowrap; }
.winbtns { display: flex; margin-left: auto; }
.winbtns button { width: 46px; height: 20px; }
.winbtns svg { width: 11px; height: 11px; fill: none; stroke: #000; }

.menubar { display: flex; gap: 14px; padding: 3px 7px 0; height: 19px; background: #fff; font-family: Lato, sans-serif; }

.toolbars { display: flex; gap: 4px; padding: 2px 2px 0 0; background: linear-gradient(#f0f0f0 2px, transparent 2px); }
.bar {
  display: flex;
  align-items: center;
  padding: 1px 2px 4px 11px;
  border-right: 1px solid #a9cbe0;
  background: linear-gradient(#e8f3fa, #d3e7f4 55%, #b1d1e5);
}
.bar::before { content: ""; width: 3px; height: 24px; margin: 0 5px -3px -8px; background: repeating-linear-gradient(#aab9c4 0 2px, #f6fafd 2px 4px); }
.bar-end { margin-left: auto; }
.bar button { width: 22px; height: 21px; }
.bar svg, .palette svg { width: 16px; height: 16px; }
.bar button.on, .palette button.on { border: 1px solid #5f9abd; background: linear-gradient(#a6cbe0, #cde4f1); }
.bar button:disabled svg { filter: grayscale(1) brightness(1.15); opacity: .7; }
.bar hr { width: 2px; height: 17px; margin: 0 3px; border: 0; border-left: 1px solid #9c9c9c; background: #fff; }
.glyph { font: bold 20px/16px "Inter", sans-serif; color: #000; padding-bottom: 3px; }
.numbers { width: 10px; font: bold 6px/6px "DejaVu Sans", sans-serif; color: #222; }

.tabs { display: flex; align-items: flex-end; padding-top: 4px; height: 28px; }
.tab { position: relative; display: flex; align-items: center; justify-content: space-between; width: 162px; height: 24px; padding: 2px 12px 0 21px; font: 11px/16px "Liberation Sans", sans-serif; }
.tab-on { width: 140px; margin-left: -11px; padding: 0 12px 0 23px; font: bold 12px/16px Roboto, sans-serif; color: #1d3f63; }
.tab-shape { position: absolute; inset: 0; width: 100%; height: 100%; }
.tab button { position: relative; }
.tab-label { gap: 2px; white-space: nowrap; }
.tab-label svg { width: 16px; height: 16px; }
.tab-close svg { width: 12px; height: 12px; }

.work {
  flex: 1;
  min-height: 0;
  display: grid;
  grid-template-columns: 28px 30px 121px minmax(0, 1fr);
  padding: 0 4px 0 0;
  border-top: 7px solid #b5d5e8;
  border-image: linear-gradient(#6ea3c3 0 1px, #c5e1f1 1px, #a9cbe0 7px) 7 0 0 0;
  background: linear-gradient(90deg, #e2e9f0 58px, #aecde0 58px);
}
.palette { display: flex; flex-direction: column; align-items: center; align-self: stretch; padding: 3px 2px 0 0; background: linear-gradient(90deg, #edf6fb, #a9cfe5); min-height: 0; overflow: hidden; }
.palette::before { content: ""; flex: none; width: 26px; height: 2px; margin-bottom: 4px; background: repeating-linear-gradient(90deg, #a5b5c0 0 2px, #fff 2px 4px); }
.palette button { flex: none; width: 22px; height: 21px; }
.palette hr { flex: none; width: 22px; height: 2px; margin: 2px 0 1px; border: 0; border-top: 1px solid #999; background: #fff; }
.rotate { align-self: start; padding: 3px 0 3px; }
.rotate input { width: 24px; height: 16px; margin: 3px 0; padding: 0 0 0 1px; border: 0; background: #fff; font: inherit; color: #222; }

.side { display: flex; flex-direction: column; gap: 4px; min-height: 0; overflow: hidden; }
.mini { height: 101px; border: 1px solid #666; background: #000; }
.mini svg { width: 100%; height: 99px; }
.traces { flex: 1; border: 1px solid #555; border-bottom: 0; background: #fff; }
.traces-head { display: flex; align-items: center; gap: 4px; height: 24px; padding: 0 3px 1px; background: linear-gradient(#e4f1f9, #b4d3e7); }
.traces-head button { width: 16px; height: 15px; border-radius: 3px; background: #0a4bdc; color: #fff; font: bold 14px/15px "Liberation Sans", sans-serif; }
.traces-head h2 { margin: 0 auto; padding-left: 4px; }
.traces ul { border: solid #0b74c8; border-width: 0 1px; font-size: 12px; line-height: 13px; }
.traces li { padding: 1px 0 0 2px; height: 13px; }
.traces li[aria-selected] { background: #0078d7; color: #fff; }

.canvas { margin-left: 4px; border: 1px solid #666; border-bottom: 0; background: #000; min-height: 0; overflow: hidden; }
.canvas svg { width: 100%; height: 100%; }
.idle:not(.fill) .work { flex: none; height: 39px; }
.idle:not(.fill) .mini { height: 32px; border-bottom: 0; }
.idle:not(.fill) .mini svg { height: 31px; }

.grid-minor { stroke: #363636; fill: none; }
.grid-major { stroke: #606060; stroke-width: 2; fill: none; }
.limit { stroke: #0000d0; fill: none; }
.zone { fill: rgb(0 0 200 / .22); stroke: #000068; }
.edge { fill: none; stroke: #ff0; }
.copper-gap { fill: none; stroke: #000008; stroke-width: 3; }
.copper { fill: none; stroke: #000078; stroke-width: 1; }
.copper-wide { fill: none; stroke: #000092; stroke-width: 2; }
.originmark { fill: none; stroke: #0000b0; }
.pads path { fill: none; }
.sq { stroke: #7a00c8; stroke-width: 6; stroke-linecap: square; }
.rd, .lg, .sm, .holelg { stroke: #8c00e0; stroke-linecap: round; stroke-width: 6; }
.sm { stroke: #6c2098; stroke-width: 4; }
.lg { stroke-width: 8; }
.hole, .holesm { stroke: #9a8a9a; stroke-width: 3; stroke-linecap: square; }
.holesm { stroke: #b060d0; stroke-width: 1; }
.holelg { stroke: #999; stroke-width: 4; }
.silk { fill: none; stroke: #0ff; }
.refs { fill: #0ff; font: bold 6px "DejaVu Sans", sans-serif; }
.refs .long { font-size: 5px; }
.caption { fill: #ff0; font: 12px "Liberation Sans", sans-serif; }
```
FILE: app.js
```js
const svgIcon = id => `<svg><use href="#${id}"/></svg>`;
const textIcons = {
  m: '<span class="glyph">m</span>',
  annot: '<span class="numbers">U1 U2 U3</span>',
};

// Icon lists: "|" separator, "*" pressed, "?" needs a live design, "#" angle field.
function fillBar(bar, idle) {
  bar.innerHTML = bar.dataset.icons.split(' ').map(token => {
    if (token === '|') return '<hr>';
    if (token === '#') return '<input type="text" value="0°" aria-label="Rotation angle">';
    const id = token.replace(/[*?]/g, '');
    const pressed = token.endsWith('*') ? ' class="on" aria-pressed="true"' : '';
    const disabled = token.endsWith('?') && idle ? ' disabled' : '';
    return `<button aria-label="${id}"${pressed}${disabled}>${textIcons[id] || svgIcon(id)}</button>`;
  }).join('');
}

document.querySelectorAll('.window').forEach(win => {
  win.prepend(document.getElementById('chrome').content.cloneNode(true));
  win.querySelectorAll('[data-icons]').forEach(bar => fillBar(bar, win.classList.contains('idle')));
});

// Minor grid, 20 steps to each major division, measured from the board origin.
const step = 15.95;
let d = '';
for (let i = -40; i < 90; i++) {
  if (i % 20) d += `M${Math.round(700 + i * step) + 0.5} 337v900`;
  if (i % 20 && i > -16) d += `M183 ${Math.round(583 + i * step) + 0.5}h1178`;
}
document.getElementById('gridMinor').setAttribute('d', d);
```
